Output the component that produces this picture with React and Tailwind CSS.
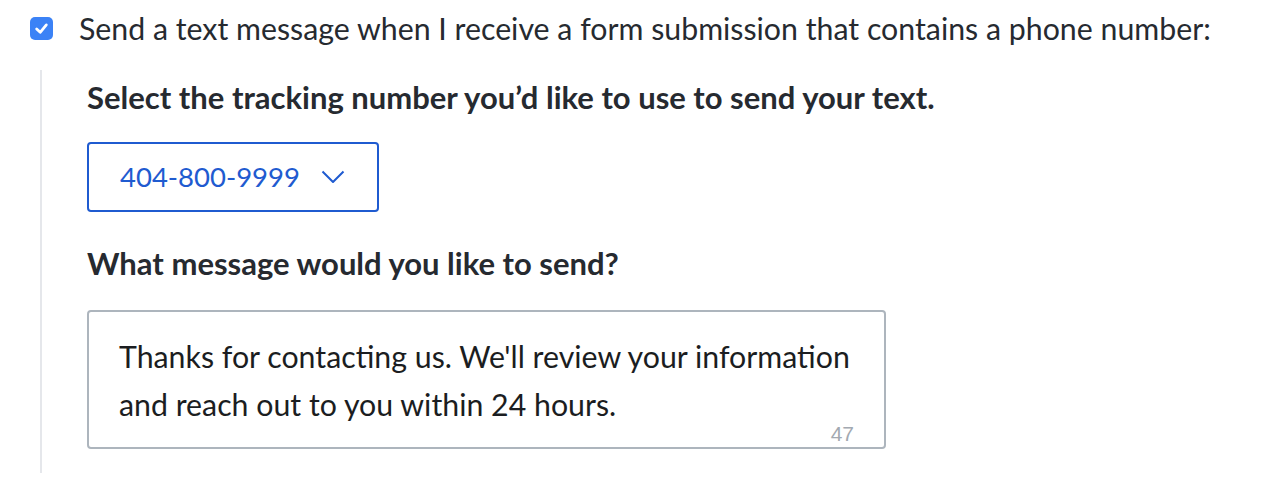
import { useState } from "react";

const App = () => {
    const [checked, setChecked] = useState(true);
    const [message, setMessage] = useState(
        "Thanks for contacting us. We'll review your information and reach out to you within 24 hours."
    );

    return (
        <div className="min-h-screen bg-white text-[#262a30]" style={{ fontFamily: 'Lato, "Noto Sans", sans-serif' }}>
            <div className="pt-[10px] pl-[30px]">
                <label className="flex items-center gap-[26px] cursor-pointer">
                    <span
                        onClick={() => setChecked(!checked)}
                        className="flex items-center justify-center w-[23px] h-[23px] rounded-[5px] bg-[#3b82f6]"
                    >
                        {checked && (
                            <svg width="15" height="15" viewBox="0 0 14 14" fill="none">
                                <polyline points="2.5,7.5 5.8,10.6 11.5,3.6" stroke="white" strokeWidth="2.6" strokeLinecap="round" strokeLinejoin="round" />
                            </svg>
                        )}
                    </span>
                    <span className="text-[30.3px] leading-[36px] whitespace-nowrap">
                        Send a text message when I receive a form submission that contains a phone number:
                    </span>
                </label>

                <div className="mt-[24px] ml-[10px] border-l-2 border-[#e5e7eb] pl-[45px] pt-[8px] pb-[24px]">
                    <h3 className="text-[31px] leading-[38px] font-bold whitespace-nowrap">
                        Select the tracking number you’d like to use to send your text.
                    </h3>

                    <button className="mt-[26px] flex items-center w-[292px] h-[70px] pl-[31px] border-2 border-[#1f5bd0] rounded-[4px] text-[#1f5bd0]">
                        <span className="text-[27.5px] whitespace-nowrap">404-800-9999</span>
                        <svg className="ml-[21px] shrink-0" width="24" height="14" viewBox="0 0 24 14" fill="none">
                            <polyline points="1.5,1.5 12,12 22.5,1.5" stroke="#1f5bd0" strokeWidth="2" strokeLinejoin="round" />
                        </svg>
                    </button>

                    <h3 className="mt-[32px] text-[31px] leading-[38px] font-bold whitespace-nowrap">
                        What message would you like to send?
                    </h3>

                    <div className="relative mt-[28px] w-[799px] h-[139px] border-2 border-[#adb5bd] rounded-[4px]">
                        <textarea
                            value={message}
                            onChange={(e) => setMessage(e.target.value)}
                            className="block w-full h-full resize-none pl-[30px] pr-[12px] pt-[20px] text-[30.3px] leading-[48px] text-[#1b1d21] outline-none bg-transparent overflow-hidden"
                        />
                        <span
                            className="absolute right-[30px] bottom-[-2px] text-[21px] text-[#a3a9b1]"
                            style={{ fontFamily: '"Liberation Sans", Arial, sans-serif' }}
                        >
                            47
                        </span>
                    </div>
                </div>
            </div>
        </div>
    );
};

export default App;
